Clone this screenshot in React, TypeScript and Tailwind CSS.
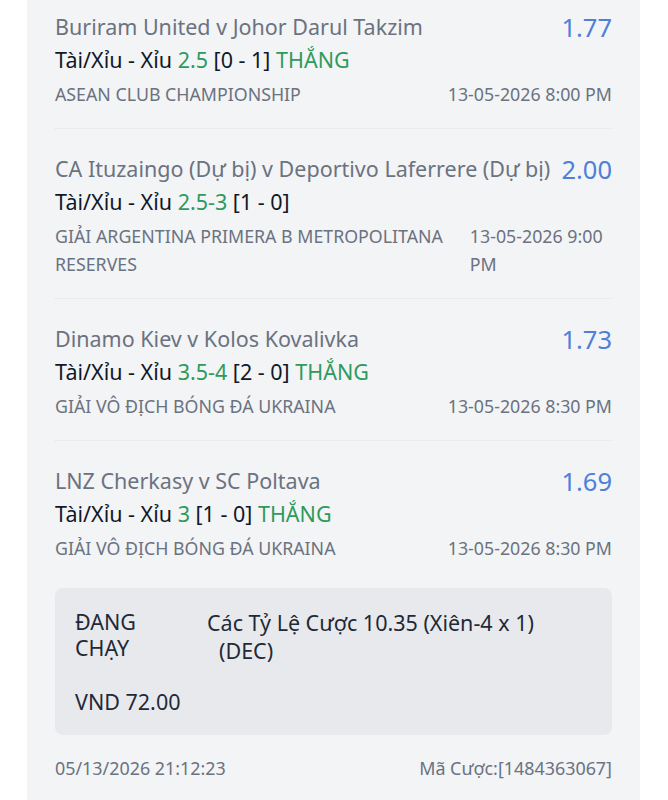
import React from "react";

interface Leg {
  match: string;
  odds: string;
  pick: string;
  line: string;
  score: string;
  won: boolean;
  league: string;
  time: string;
}

const LEGS: Leg[] = [
  {
    match: "Buriram United v Johor Darul Takzim",
    odds: "1.77",
    pick: "Tài/Xỉu - Xỉu",
    line: "2.5",
    score: "[0 - 1]",
    won: true,
    league: "ASEAN CLUB CHAMPIONSHIP",
    time: "13-05-2026 8:00 PM",
  },
  {
    match: "CA Ituzaingo (Dự bị) v Deportivo Laferrere (Dự bị)",
    odds: "2.00",
    pick: "Tài/Xỉu - Xỉu",
    line: "2.5-3",
    score: "[1 - 0]",
    won: false,
    league: "GIẢI ARGENTINA PRIMERA B METROPOLITANA RESERVES",
    time: "13-05-2026 9:00 PM",
  },
  {
    match: "Dinamo Kiev v Kolos Kovalivka",
    odds: "1.73",
    pick: "Tài/Xỉu - Xỉu",
    line: "3.5-4",
    score: "[2 - 0]",
    won: true,
    league: "GIẢI VÔ ĐỊCH BÓNG ĐÁ UKRAINA",
    time: "13-05-2026 8:30 PM",
  },
  {
    match: "LNZ Cherkasy v SC Poltava",
    odds: "1.69",
    pick: "Tài/Xỉu - Xỉu",
    line: "3",
    score: "[1 - 0]",
    won: true,
    league: "GIẢI VÔ ĐỊCH BÓNG ĐÁ UKRAINA",
    time: "13-05-2026 8:30 PM",
  },
];

const LegRow: React.FC<{ leg: Leg; first: boolean; last: boolean }> = ({ leg, first, last }) => (
  <div
    className={`${first ? "pt-[13px]" : "pt-[26px]"} ${
      last ? "pb-[26px]" : "pb-[20px] border-b border-dotted border-[#e2e4e8]"
    }`}
  >
    <div className="flex items-start justify-between gap-[8px]">
      <div className="whitespace-nowrap text-[21.5px] leading-[28px] text-[#6b7280]">{leg.match}</div>
      <div className="shrink-0 text-[25.5px] leading-[28px] text-[#4f7fd8]">{leg.odds}</div>
    </div>
    <div className="mt-[5px] text-[21.5px] leading-[28px] text-[#111827]">
      {leg.pick} <span className="text-[#2e9a5c]">{leg.line}</span> {leg.score}
      {leg.won && <span className="text-[#2e9a5c]"> THẮNG</span>}
    </div>
    <div className="mt-[6px] flex items-start justify-between gap-[20px] text-[17.8px] leading-[28px] text-[#6b7280]">
      <div className="min-w-0">{leg.league}</div>
      <div className="shrink-[0.8]">{leg.time}</div>
    </div>
  </div>
);

export default function App() {
  return (
    <div
      className="min-h-[800px] bg-white"
      style={{ fontFamily: '"Noto Sans", "Open Sans", sans-serif' }}
    >
      <div className="mx-[27px] w-[613px] min-h-[800px] bg-[#f3f4f6] px-[28px] pb-[30px]">
        {LEGS.map((leg, i) => (
          <LegRow key={i} leg={leg} first={i === 0} last={i === LEGS.length - 1} />
        ))}

        <div className="rounded-[8px] bg-[#e8e9ed] px-[20px] pt-[21px] pb-[20px] text-[21.5px] text-[#1f2937]">
          <div className="grid grid-cols-[100px_1fr] gap-x-[32px]">
            <div className="leading-[26px]">ĐANG CHẠY</div>
            <div className="leading-[28px]">
              <div>Các Tỷ Lệ Cược 10.35 (Xiên-4 x 1)</div>
              <div className="pl-[12px]">(DEC)</div>
            </div>
          </div>
          <div className="mt-[24px] leading-[26px]">VND 72.00</div>
        </div>

        <div className="mt-[20px] flex justify-between text-[17.9px] leading-[26px] text-[#6b7280]">
          <span>05/13/2026 21:12:23</span>
          <span>Mã Cược:[1484363067]</span>
        </div>
      </div>
    </div>
  );
}
